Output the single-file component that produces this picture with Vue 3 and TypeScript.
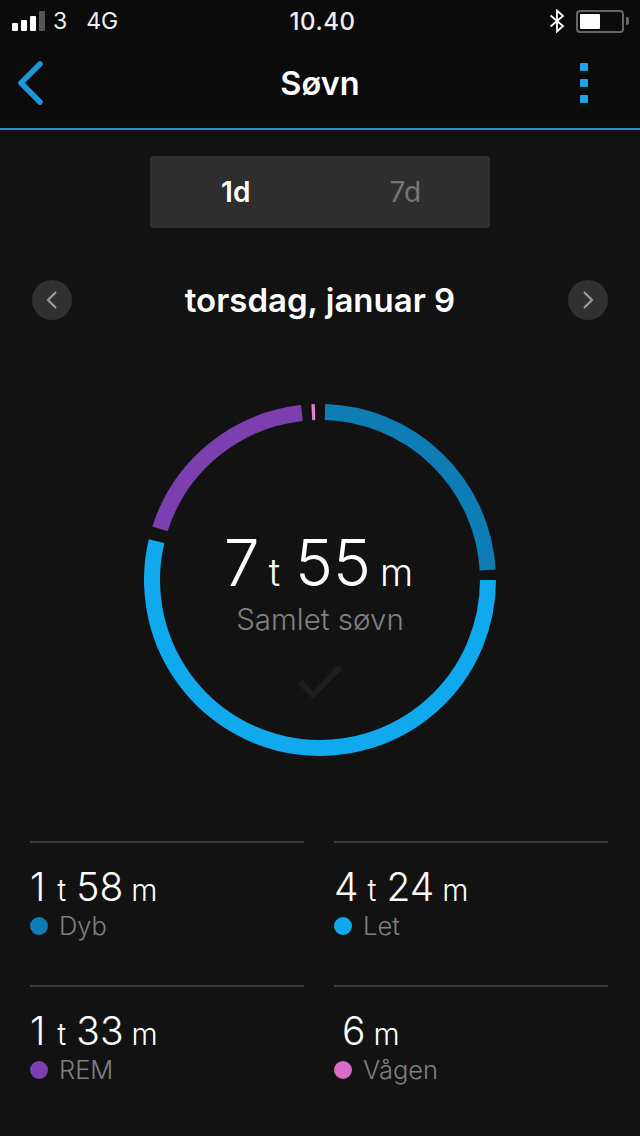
<script setup lang="ts">
import { ref } from 'vue';

const tabs = ['1d', '7d'];
const currentTab = ref('1d');

// angles are degrees clockwise from 12 o'clock
const segments = [
  { id: 'deep', color: '#0e7db5', from: 1.7, to: 86.6 },
  { id: 'light', color: '#10a9ee', from: 90, to: 283.4 },
  { id: 'rem', color: '#7c3fb0', from: 287.7, to: 353.8 },
  { id: 'awake', color: '#dc82ce', from: 357.2, to: 358.3 },
];

const stats = [
  { id: 'deep', parts: [['1', 't'], ['58', 'm']], label: 'Dyb', color: '#0e7db5' },
  { id: 'light', parts: [['4', 't'], ['24', 'm']], label: 'Let', color: '#10a9ee' },
  { id: 'rem', parts: [['1', 't'], ['33', 'm']], label: 'REM', color: '#7c3fb0' },
  { id: 'awake', parts: [['6', 'm']], label: 'Vågen', color: '#d96cc8', indent: true },
];

function point(deg: number, r: number): string {
  const a = (deg * Math.PI) / 180;
  return `${(176 + r * Math.sin(a)).toFixed(2)} ${(176 - r * Math.cos(a)).toFixed(2)}`;
}

function arcPath(from: number, to: number): string {
  const large = to - from > 180 ? 1 : 0;
  return `M${point(from, 168)} A168 168 0 ${large} 1 ${point(to, 168)}`;
}
</script>

<template>
  <div class="screen">
    <div class="top">
      <div class="status">
        <div class="status-left">
          <div class="signal">
            <i class="b1"></i><i class="b2"></i><i class="b3"></i><i class="b4"></i>
          </div>
          <span class="carrier">3</span>
          <span class="net">4G</span>
        </div>
        <span class="clock">10.40</span>
        <div class="status-right">
          <svg class="bt" width="16" height="24" viewBox="0 0 16 24" fill="none" stroke="#fff" stroke-width="1.8">
            <path d="M1.5 6.5 14 17 8 22.5V1.5L14 7 1.5 17.5" />
          </svg>
          <div class="battery"><div class="charge"></div></div>
          <div class="nub"></div>
        </div>
      </div>
      <div class="nav">
        <svg class="back" width="28" height="44" viewBox="0 0 28 44" fill="none" stroke="#1b98dc" stroke-width="5.5" stroke-linecap="round" stroke-linejoin="round">
          <path d="M24 3 5 22l19 19" />
        </svg>
        <h1>Søvn</h1>
        <div class="more"><i></i><i></i><i></i></div>
      </div>
    </div>

    <div class="segmented">
      <a
        v-for="tab in tabs"
        :key="tab"
        href="#"
        :class="{ selected: currentTab === tab }"
        @click.prevent="currentTab = tab"
      >{{ tab }}</a>
    </div>

    <div class="date-row">
      <button class="round">
        <svg width="12" height="20" viewBox="0 0 12 20" fill="none" stroke="#a0a0a0" stroke-width="2">
          <path d="M10 2 2 10l8 8" />
        </svg>
      </button>
      <h2>torsdag, januar 9</h2>
      <button class="round">
        <svg width="12" height="20" viewBox="0 0 12 20" fill="none" stroke="#a0a0a0" stroke-width="2">
          <path d="m2 2 8 8-8 8" />
        </svg>
      </button>
    </div>

    <div class="ring">
      <svg width="352" height="352" viewBox="0 0 352 352" fill="none" stroke-width="16">
        <path v-for="s in segments" :key="s.id" :d="arcPath(s.from, s.to)" :stroke="s.color" />
      </svg>
      <div class="ring-inner">
        <div class="total">
          <span class="num">7</span><span class="unit">t</span><span class="num">55</span><span class="unit">m</span>
        </div>
        <div class="total-label">Samlet søvn</div>
        <svg class="check" width="46" height="38" viewBox="0 0 46 38" fill="none" stroke="#1e1e1e" stroke-width="6">
          <path d="m3 19 13 13L43 4" />
        </svg>
      </div>
    </div>

    <div class="stats">
      <div v-for="stat in stats" :key="stat.id" class="stat">
        <div class="value" :class="{ indent: stat.indent }">
          <template v-for="part in stat.parts" :key="part[1]">
            <span class="num">{{ part[0] }}</span><span class="unit" :class="{ 'after-one': part[0] === '1' }">{{ part[1] }}</span>
          </template>
        </div>
        <div class="legend">
          <i class="dot" :style="{ background: stat.color }"></i>
          <span>{{ stat.label }}</span>
        </div>
      </div>
    </div>
  </div>
</template>

<style scoped>
.screen {
  width: 640px;
  height: 1136px;
  overflow: hidden;
  background: #121212;
  color: #fff;
  font-family: Inter, "Liberation Sans", sans-serif;
}
.top {
  background: #0b0b0b;
  height: 128px;
  border-bottom: 2px solid #2e8fc8;
}
.status {
  height: 42px;
  padding: 0 11px 0 12px;
  display: flex;
  align-items: center;
  justify-content: space-between;
  font-size: 23px;
  color: #eee;
}
.status-left {
  width: 210px;
  display: flex;
  align-items: center;
}
.signal {
  display: flex;
  align-items: flex-end;
  gap: 3px;
  height: 20px;
  margin-right: 8px;
}
.signal i {
  width: 6px;
  background: #fff;
  border-radius: 1px;
}
.signal .b1 { height: 8px; }
.signal .b2 { height: 11px; }
.signal .b3 { height: 15px; }
.signal .b4 { height: 20px; background: #555; }
.net {
  margin-left: 19px;
}
.clock {
  font-size: 24px;
  font-weight: 500;
  letter-spacing: 0.5px;
  position: relative;
  left: 2px;
}
.status-right {
  width: 210px;
  display: flex;
  align-items: center;
  justify-content: flex-end;
}
.bt {
  margin-right: 11px;
}
.battery {
  width: 48px;
  height: 23px;
  box-sizing: border-box;
  border: 2px solid #666;
  border-radius: 4px;
  padding: 2px;
}
.charge {
  width: 20px;
  height: 15px;
  background: #fff;
  border-radius: 1px;
}
.nub {
  width: 3px;
  height: 8px;
  margin-left: 2px;
  background: #666;
  border-radius: 0 2px 2px 0;
}
.nav {
  height: 82px;
  display: flex;
  align-items: center;
  justify-content: space-between;
  padding: 0 52px 0 16px;
}
h1 {
  margin: 0;
  font-size: 32.5px;
  font-weight: 600;
  position: relative;
  left: 8px;
}
.more {
  display: flex;
  flex-direction: column;
  gap: 8px;
}
.more i {
  width: 8px;
  height: 8px;
  background: #1fa2e6;
  border-radius: 1px;
}
.segmented {
  width: 340px;
  height: 72px;
  margin: 26px auto 0;
  padding-left: 1px;
  box-sizing: border-box;
  background: #2e2e2e;
  border-radius: 3px;
  display: grid;
  grid-template-columns: 1fr 1fr;
}
.segmented a {
  display: flex;
  align-items: center;
  justify-content: center;
  font-size: 28px;
  color: #767676;
  text-decoration: none;
}
.segmented a.selected {
  color: #fff;
  font-weight: 600;
}
.date-row {
  margin-top: 52px;
  padding: 0 32px;
  height: 40px;
  display: flex;
  align-items: center;
  justify-content: space-between;
}
h2 {
  margin: 0;
  font-size: 33px;
  font-weight: 600;
}
.round {
  width: 40px;
  height: 40px;
  padding: 0;
  border: 0;
  border-radius: 50%;
  background: #303030;
  display: flex;
  align-items: center;
  justify-content: center;
}
.ring {
  width: 352px;
  height: 352px;
  margin: 84px auto 0;
  display: grid;
}
.ring > * {
  grid-area: 1 / 1;
}
.ring-inner {
  display: flex;
  flex-direction: column;
  align-items: center;
  padding-top: 122px;
}
.total {
  height: 74px;
  padding-right: 3px;
  display: flex;
  align-items: baseline;
  font-weight: 300;
}
.total .num {
  font-size: 64px;
  line-height: 74px;
}
.total .unit {
  font-size: 38px;
  margin: 0 15px 0 9px;
}
.total .unit:last-child {
  margin-right: 0;
  margin-left: 9px;
}
.total-label {
  margin-top: 2px;
  font-size: 29.5px;
  line-height: 34px;
  font-weight: 300;
  color: #808080;
}
.check {
  margin-top: 27px;
}
.stats {
  margin-top: 85px;
  padding: 0 32px 0 30px;
  display: grid;
  grid-template-columns: 274px 274px;
  column-gap: 30px;
  row-gap: 0;
}
.stat {
  height: 144px;
  box-sizing: border-box;
  border-top: 2px solid #3a3a3a;
  padding-top: 21px;
}
.value {
  height: 46px;
  display: flex;
  align-items: baseline;
  font-weight: 300;
}
.value.indent {
  padding-left: 8px;
}
.value .num {
  font-size: 39px;
  line-height: 46px;
}
.value .unit {
  font-size: 30px;
  margin: 0 10px 0 9px;
}
.value .unit.after-one {
  margin-left: 12px;
}
.value .unit:last-child {
  margin-left: 8px;
}
.legend {
  margin-top: 1px;
  display: flex;
  align-items: center;
  font-size: 25.5px;
  line-height: 30px;
  font-weight: 300;
  color: #808080;
}
.dot {
  width: 18px;
  height: 18px;
  border-radius: 50%;
  margin-right: 11px;
}
</style>

<style>
html, body {
  background: #121212;
}
</style>
